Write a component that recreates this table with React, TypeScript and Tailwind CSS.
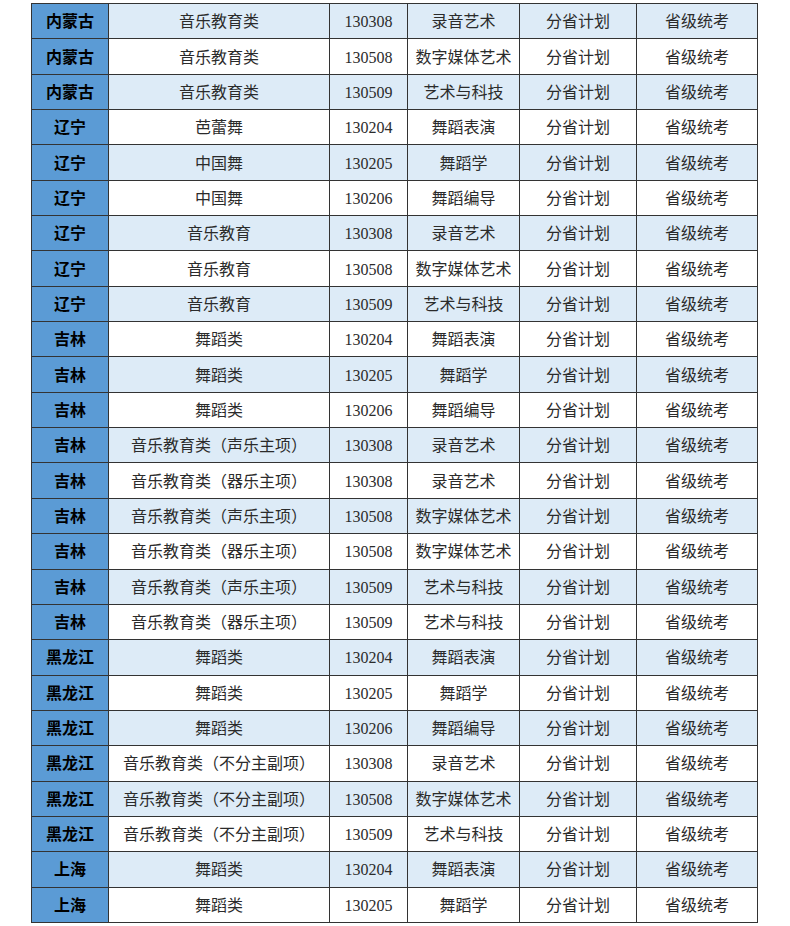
const rows: [string, string, string, string][] = [
  ["内蒙古", "音乐教育类", "130308", "录音艺术"],
  ["内蒙古", "音乐教育类", "130508", "数字媒体艺术"],
  ["内蒙古", "音乐教育类", "130509", "艺术与科技"],
  ["辽宁", "芭蕾舞", "130204", "舞蹈表演"],
  ["辽宁", "中国舞", "130205", "舞蹈学"],
  ["辽宁", "中国舞", "130206", "舞蹈编导"],
  ["辽宁", "音乐教育", "130308", "录音艺术"],
  ["辽宁", "音乐教育", "130508", "数字媒体艺术"],
  ["辽宁", "音乐教育", "130509", "艺术与科技"],
  ["吉林", "舞蹈类", "130204", "舞蹈表演"],
  ["吉林", "舞蹈类", "130205", "舞蹈学"],
  ["吉林", "舞蹈类", "130206", "舞蹈编导"],
  ["吉林", "音乐教育类（声乐主项）", "130308", "录音艺术"],
  ["吉林", "音乐教育类（器乐主项）", "130308", "录音艺术"],
  ["吉林", "音乐教育类（声乐主项）", "130508", "数字媒体艺术"],
  ["吉林", "音乐教育类（器乐主项）", "130508", "数字媒体艺术"],
  ["吉林", "音乐教育类（声乐主项）", "130509", "艺术与科技"],
  ["吉林", "音乐教育类（器乐主项）", "130509", "艺术与科技"],
  ["黑龙江", "舞蹈类", "130204", "舞蹈表演"],
  ["黑龙江", "舞蹈类", "130205", "舞蹈学"],
  ["黑龙江", "舞蹈类", "130206", "舞蹈编导"],
  ["黑龙江", "音乐教育类（不分主副项）", "130308", "录音艺术"],
  ["黑龙江", "音乐教育类（不分主副项）", "130508", "数字媒体艺术"],
  ["黑龙江", "音乐教育类（不分主副项）", "130509", "艺术与科技"],
  ["上海", "舞蹈类", "130204", "舞蹈表演"],
  ["上海", "舞蹈类", "130205", "舞蹈学"],
];

const cell = "border-[1.5px] border-[#333] text-center align-middle p-0 pt-[2px]";

export default function App() {
  return (
    <div className="min-h-[926px] bg-white pt-[3px] pl-[31px]">
      <table
        className="table-fixed border-collapse text-[16px] text-[#2b2b2b] leading-none"
        style={{ fontFamily: '"Liberation Serif", "Noto Sans CJK SC", serif' }}
      >
        <colgroup>
          <col className="w-[77px]" />
          <col className="w-[221px]" />
          <col className="w-[78px]" />
          <col className="w-[112px]" />
          <col className="w-[117px]" />
          <col className="w-[121px]" />
        </colgroup>
        <tbody>
          {rows.map(([prov, major, code, name], i) => (
            <tr key={i} className={i % 2 === 0 ? "h-[35.35px] bg-[#ddebf7]" : "h-[35.35px] bg-white"}>
              <td className={`${cell} bg-[#5b9bd5] font-bold text-black`}>{prov}</td>
              <td className={cell}>{major}</td>
              <td className={cell}>{code}</td>
              <td className={cell}>{name}</td>
              <td className={cell}>分省计划</td>
              <td className={cell}>省级统考</td>
            </tr>
          ))}
        </tbody>
      </table>
    </div>
  );
}
